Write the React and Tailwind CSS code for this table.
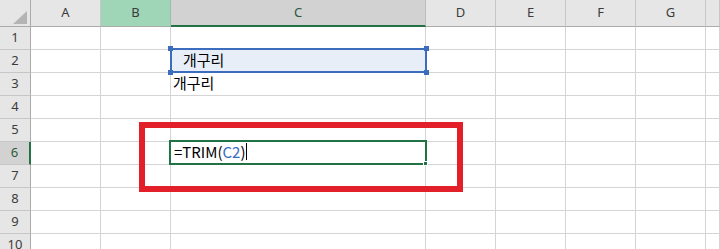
import React from "react";

const COLS = ["A", "B", "C", "D", "E", "F", "G", ""];
const ROWS = [1, 2, 3, 4, 5, 6, 7, 8, 9, 10];

const headerFont = { fontFamily: '"Noto Sans", "Open Sans", sans-serif' };
const cellFont = { fontFamily: '"Noto Sans CJK KR", "Noto Sans", sans-serif' };

function ColHeader({ label }) {
  if (label === "B") {
    return (
      <div className="flex items-center justify-center bg-[#a0d6b8] border-r border-b border-r-[#9bbfa9] border-b-[#ababab] text-[13px] text-[#3c3c3c]" style={headerFont}>
        {label}
      </div>
    );
  }
  if (label === "C") {
    return (
      <div className="flex items-center justify-center bg-[#d2d2d2] border-r border-r-[#bdbdbd] border-b-2 border-b-[#217346] text-[13px] text-[#2a5a3c]" style={headerFont}>
        {label}
      </div>
    );
  }
  return (
    <div className="flex items-center justify-center bg-[#e6e6e6] border-r border-b border-r-[#c6c6c6] border-b-[#ababab] text-[13px] text-[#3c3c3c]" style={headerFont}>
      {label}
    </div>
  );
}

function RowHeader({ n }) {
  if (n === 6) {
    return (
      <div className="flex items-center justify-center bg-[#d2d2d2] border-r-2 border-b border-r-[#217346] border-b-[#c6c6c6] text-[13px] text-[#2a5a3c]" style={headerFont}>
        {n}
      </div>
    );
  }
  return (
    <div className="flex items-center justify-center bg-[#e6e6e6] border-r border-b border-r-[#ababab] border-b-[#c6c6c6] text-[13px] text-[#3c3c3c]" style={headerFont}>
      {n}
    </div>
  );
}

function CellContent({ row, col }) {
  if (col === "C" && row === 2) {
    return <span className="whitespace-pre pl-[12px] text-black">개구리</span>;
  }
  if (col === "C" && row === 3) {
    return <span className="pl-[2px] text-black">개구리</span>;
  }
  if (col === "C" && row === 6) {
    return (
      <span className="flex items-center pl-[3px] text-black">
        =TRIM(<span className="text-[#3a6bc2]">C2</span>)
        <span className="ml-[1px] inline-block h-[17px] w-px bg-black" />
      </span>
    );
  }
  return null;
}

export default function App() {
  return (
    <div className="relative h-[249px] w-[720px] overflow-hidden bg-white">
      <div className="grid grid-cols-[31px_70px_70px_255px_70px_70px_70px_70px_1fr] grid-rows-[27px_repeat(10,23px)]">
        {/* corner with select-all triangle */}
        <div className="flex items-end justify-end bg-[#e6e6e6] border-r border-b border-r-[#ababab] border-b-[#ababab] pr-[3px] pb-[2px]">
          <svg width="14" height="13" viewBox="0 0 14 13">
            <polygon points="14,0 14,13 0,13" fill="#b4b4b4" />
          </svg>
        </div>
        {COLS.map((c, i) => (
          <ColHeader key={"h" + i} label={c} />
        ))}
        {ROWS.map((r) => (
          <React.Fragment key={r}>
            <RowHeader n={r} />
            {COLS.map((c, i) => (
              <div
                key={r + "-" + i}
                className={
                  "flex items-center overflow-visible whitespace-nowrap border-r border-b border-[#d4d4d4] pb-[3px] text-[15px] leading-none " +
                  (c === "C" && r === 2 ? "bg-[#e8eef8]" : "bg-white")
                }
                style={cellFont}
              >
                <CellContent row={r} col={c} />
              </div>
            ))}
          </React.Fragment>
        ))}
      </div>

      {/* selected range C2 */}
      <div className="pointer-events-none absolute left-[170px] top-[48px] h-[25px] w-[257px] border-2 border-[#3c6cbe]" />
      <div className="absolute left-[168px] top-[46px] h-[5px] w-[5px] bg-[#3c6cbe]" />
      <div className="absolute left-[424px] top-[46px] h-[5px] w-[5px] bg-[#3c6cbe]" />
      <div className="absolute left-[168px] top-[70px] h-[5px] w-[5px] bg-[#3c6cbe]" />
      <div className="absolute left-[424px] top-[70px] h-[5px] w-[5px] bg-[#3c6cbe]" />

      {/* active cell C6 with fill handle */}
      <div className="pointer-events-none absolute left-[169px] top-[140px] h-[25px] w-[258px] border-2 border-[#217346]" />
      <div className="absolute left-[423px] top-[161px] h-[5px] w-[5px] border border-white bg-[#217346]" />

      {/* red highlight frame */}
      <div className="pointer-events-none absolute left-[139px] top-[122px] h-[70px] w-[324px] border-[6px] border-[#e3202a]" />
    </div>
  );
}
